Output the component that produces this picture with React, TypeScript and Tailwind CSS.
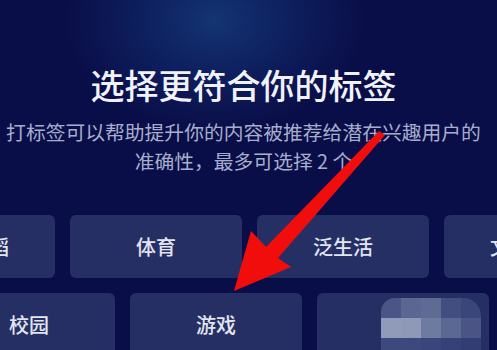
import React from 'react';

const row1 = ['音乐舞蹈', '体育', '泛生活', '文化教育'];
const row2 = ['校园', '游戏', ''];

const Tag: React.FC<{ label: string; children?: React.ReactNode }> = ({ label, children }) => (
  <div className="relative w-[172px] h-[63px] shrink-0 rounded-[6px] bg-[#262f63] flex items-center justify-center text-[20px] font-medium text-[#e2e5f2]">
    {label}
    {children}
  </div>
);

// pixelated blur patch over the third tag of the second row
const Mosaic: React.FC = () => (
  <div className="absolute left-[64px] top-[5px] grid grid-cols-5 w-[100px] rounded-tl-[14px] rounded-tr-[18px] overflow-hidden">
    <div className="h-[20px] bg-[#4b5686]" />
    <div className="h-[20px] bg-[#5b6693]" />
    <div className="h-[20px] bg-[#5f6a95]" />
    <div className="h-[20px] bg-[#434e80]" />
    <div className="h-[20px] bg-[#3a457a]" />
    <div className="h-[20px] bg-[#8f9bb9]" />
    <div className="h-[20px] bg-[#8d99b7]" />
    <div className="h-[20px] bg-[#6e7ba0]" />
    <div className="h-[20px] bg-[#5c6894]" />
    <div className="h-[20px] bg-[#4a5586]" />
    <div className="h-[20px] bg-[#3d487c]" />
    <div className="h-[20px] bg-[#3d487c]" />
    <div className="h-[20px] bg-[#3a4579]" />
    <div className="h-[20px] bg-[#364177]" />
    <div className="h-[20px] bg-[#323d73]" />
  </div>
);

const App: React.FC = () => {
  return (
    <div
      className="relative w-[497px] h-[350px] overflow-hidden bg-[#0a0e48] bg-[radial-gradient(ellipse_150px_110px_at_215px_20px,#143472_0%,#0e2160_45%,#0a0e48_100%)]"
      style={{ fontFamily: '"Noto Sans CJK SC", "Noto Sans", sans-serif' }}
    >
      <div className="flex flex-col items-center pr-[10px]">
        <h1 className="mt-[62px] text-[34px] leading-[46px] font-medium text-[#f1f2f8]">选择更符合你的标签</h1>
        <p className="mt-[9px] text-[19.8px] leading-[29px] text-[#a7aecd] text-center">
          打标签可以帮助提升你的内容被推荐给潜在兴趣用户的
          <br />
          准确性，最多可选择 2 个
        </p>
      </div>

      <div className="mt-[40px] flex flex-col gap-[15px]">
        <div className="flex gap-[15px] ml-[-117px]">
          {row1.map((t) => (
            <Tag key={t} label={t} />
          ))}
        </div>
        <div className="flex gap-[15px] ml-[-57px]">
          {row2.map((t, i) => (
            <Tag key={i} label={t}>
              {i === 2 && <Mosaic />}
            </Tag>
          ))}
        </div>
      </div>

      {/* red annotation arrow */}
      <svg className="absolute inset-0 pointer-events-none" width="497" height="350" viewBox="0 0 497 350">
        <polygon
          points="379,131 385,135 278,258 291,267 234,291 251,231 266,247"
          fill="#f20d0d"
        />
      </svg>
    </div>
  );
};

export default App;
